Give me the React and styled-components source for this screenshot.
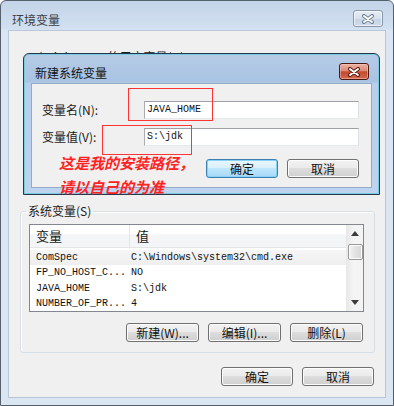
import React from "react";
import styled, { createGlobalStyle } from "styled-components";

const CJK = `"Noto Sans CJK SC", "Noto Sans", sans-serif`;
const MONO = `"Liberation Mono", "DejaVu Sans Mono", monospace`;

const Global = createGlobalStyle`
  html, body { margin: 0; padding: 0; background: #ffffff; }
  body { font-family: ${CJK}; }
  * { box-sizing: border-box; }
`;

const Window = styled.div`
  position: relative;
  width: 394px;
  height: 406px;
  border: 1px solid #56606d;
  border-radius: 6px 6px 0 0;
  background: linear-gradient(#c3d4e8 0px, #d2e0f0 28px, #dae6f3 29px, #dbe6f3 100%);
  display: flex;
  flex-direction: column;
  padding: 0 7px 7px 7px;
  overflow: hidden;
`;

const TitleBar = styled.div`
  height: 29px;
  flex: none;
  display: flex;
  justify-content: space-between;
  align-items: flex-start;
  padding: 0 3px 0 4px;
`;

const TitleText = styled.div`
  font-family: ${CJK};
  font-size: 12px;
  line-height: 14px;
  color: ${(p) => (p.$active ? "#111" : "#3a3f47")};
  padding-top: 12px;
`;

const CloseButton = styled.div`
  margin-top: 9px;
  width: 30px;
  height: 17px;
  border-radius: 3px;
  display: flex;
  align-items: center;
  justify-content: center;
  border: 1px solid ${(p) => (p.$red ? "#4a1a14" : "#8a98ab")};
  background: ${(p) =>
    p.$red
      ? "linear-gradient(#eab2a4 0%, #dc8a77 45%, #c44a30 52%, #d0694a 100%)"
      : "linear-gradient(#e6edf6 0%, #d6e1ee 50%, #c6d4e5 52%, #cfdbea 100%)"};
  box-shadow: inset 0 0 0 1px ${(p) => (p.$red ? "rgba(255,200,190,0.5)" : "rgba(255,255,255,0.6)")};
`;

const ClientArea = styled.div`
  flex: 1;
  background: #f0f0f0;
  border: 1px solid #b7c7d9;
  display: flex;
  flex-direction: column;
  padding: 19px 10px 11px 11px;
`;

const HiddenLabel = styled.div`
  font-family: ${CJK};
  font-size: 12px;
  line-height: 14px;
  color: #1a1a1a;
  padding-left: 8px;
  height: 14px;
`;

const GroupBox = styled.fieldset`
  margin: 140px 0 0 0;
  border: 1px solid #d5dfe5;
  border-radius: 3px;
  padding: 0 10px 10px 8px;
  box-shadow: inset 1px 1px 0 #ffffff;
  min-width: 0;
`;

const Legend = styled.legend`
  font-family: ${CJK};
  font-size: 12px;
  line-height: 14px;
  padding: 0 2px;
  margin-left: -3px;
  color: #1a1a1a;
`;

const ListView = styled.div`
  margin-top: 6px;
  height: 88px;
  border: 1px solid #828790;
  background: #ffffff;
  display: flex;
`;

const ListMain = styled.div`
  flex: 1;
  min-width: 0;
  display: flex;
  flex-direction: column;
  overflow: hidden;
`;

const HeaderRow = styled.div`
  height: 23px;
  flex: none;
  display: flex;
  background: linear-gradient(#ffffff 0%, #ffffff 40%, #f4f5f7 45%, #f4f5f7 100%);
  border-bottom: 1px solid #e5e5e5;
`;

const HeaderCell = styled.div`
  width: ${(p) => p.$w || "auto"};
  flex: ${(p) => (p.$w ? "none" : "1")};
  font-family: ${CJK};
  font-size: 13px;
  line-height: 22px;
  color: #1a1a1a;
  padding-left: ${(p) => p.$pl || "5px"};
  border-right: ${(p) => (p.$w ? "1px solid #e3e5e8" : "none")};
`;

const Rows = styled.div`
  padding-top: 2px;
`;

const Row = styled.div`
  height: 15.3px;
  display: flex;
  align-items: center;
  background: ${(p) => (p.$hl ? "linear-gradient(#f6f6f6, #eeeeee)" : "transparent")};
  font-family: ${MONO};
  font-size: 10px;
  color: #111;
`;

const Cell = styled.div`
  width: ${(p) => p.$w || "auto"};
  flex: ${(p) => (p.$w ? "none" : "1")};
  padding-left: ${(p) => p.$pl || "5px"};
  white-space: nowrap;
  overflow: hidden;
`;

const ScrollBar = styled.div`
  width: 17px;
  flex: none;
  background: linear-gradient(90deg, #e9e9e9, #f4f4f4 40%, #f4f4f4);
  border-left: 1px solid #e8e8e8;
  display: flex;
  flex-direction: column;
  align-items: center;
`;

const ArrowBox = styled.div`
  width: 16px;
  height: 17px;
  display: flex;
  align-items: center;
  justify-content: center;
`;

const Thumb = styled.div`
  margin-top: 2px;
  width: 15px;
  height: 16px;
  border: 1px solid #9a9a9a;
  border-radius: 2px;
  background: linear-gradient(90deg, #f3f3f3, #e2e2e2 50%, #d6d6d6);
  box-shadow: inset 0 0 0 1px #fbfbfb;
`;

const Track = styled.div`
  flex: 1;
`;

const ButtonRow = styled.div`
  display: flex;
  justify-content: flex-end;
  gap: ${(p) => p.$gap || "9px"};
  margin-top: ${(p) => p.$mt || "0"};
  padding-right: ${(p) => p.$pr || "0"};
`;

const Button = styled.div`
  width: ${(p) => p.$w || "73px"};
  height: 19px;
  border: 1px solid ${(p) => (p.$default ? "#3c7fb1" : "#707070")};
  border-radius: 3px;
  background: ${(p) =>
    p.$default
      ? "linear-gradient(#eaf6fd 0%, #d9f0fc 45%, #bee6fd 50%, #a7d9f5 100%)"
      : "linear-gradient(#f2f2f2 0%, #ebebeb 45%, #dddddd 50%, #cfcfcf 100%)"};
  box-shadow: inset 0 0 0 1px ${(p) => (p.$default ? "#86d2f5" : "#fcfcfc")};
  font-family: ${CJK};
  font-size: 12px;
  line-height: 17px;
  text-align: center;
  color: #111;
  white-space: nowrap;
`;

const BottomButtons = styled(ButtonRow)`
  margin-top: auto;
  padding-right: 1px;
`;

const Dialog = styled.div`
  position: absolute;
  left: 22px;
  top: 52px;
  width: 357px;
  height: 142px;
  border: 1px solid #27384b;
  border-radius: 6px 6px 0 0;
  background: linear-gradient(#b6cce6 0px, #a9c3e3 28px, #b7cfec 29px, #bdd3ee 100%);
  box-shadow: inset 0 0 0 1px #79c9e0;
  display: flex;
  flex-direction: column;
  padding: 0 7px 6px 7px;
`;

const DialogClient = styled.div`
  flex: 1;
  background: #f0f0f0;
  border: 1px solid #94abc7;
  padding: 17px 12px 0 10px;
  display: flex;
  flex-direction: column;
`;

const FieldRow = styled.div`
  display: flex;
  align-items: center;
  margin-top: ${(p) => p.$mt || "0"};
`;

const FieldLabel = styled.div`
  width: 102px;
  flex: none;
  font-family: ${CJK};
  font-size: 12px;
  line-height: 14px;
  color: #1a1a1a;
`;

const TextBox = styled.div`
  width: 218px;
  height: 18px;
  background: #fff;
  border: 1px solid #abadb3;
  border-top-color: #9da0a7;
  border-right-color: #dbdfe6;
  border-bottom-color: #e3e9ef;
  font-family: ${MONO};
  font-size: 10px;
  line-height: 16px;
  padding-left: 2px;
  color: #111;
`;

const RedBox = styled.div`
  position: absolute;
  left: ${(p) => p.$x}px;
  top: ${(p) => p.$y}px;
  width: ${(p) => p.$w}px;
  height: ${(p) => p.$h}px;
  border: 1px solid #ff3535;
  pointer-events: none;
`;

const Note = styled.div`
  position: absolute;
  left: 58px;
  top: 150px;
  font-family: ${CJK};
  font-size: 15px;
  font-weight: bold;
  font-style: italic;
  line-height: 24px;
  color: #ff2222;
  white-space: nowrap;
`;

const XIcon = ({ red }) => (
  <svg width="14" height="10" viewBox="0 0 14 10">
    <path d="M3 2 L11 8 M11 2 L3 8" stroke={red ? "#5a1a12" : "#6f7d90"} strokeWidth="4" strokeLinecap="round" />
    <path d="M3 2 L11 8 M11 2 L3 8" stroke="#ffffff" strokeWidth="2" strokeLinecap="round" />
  </svg>
);

const Arrow = ({ down }) => (
  <svg width="8" height="5" viewBox="0 0 8 5">
    <path d={down ? "M0 0 L8 0 L4 5 Z" : "M4 0 L8 5 L0 5 Z"} fill="#3c3c3c" />
  </svg>
);

const rows = [
  ["ComSpec", "C:\\Windows\\system32\\cmd.exe", true],
  ["FP_NO_HOST_C...", "NO"],
  ["JAVA_HOME", "S:\\jdk"],
  ["NUMBER_OF_PR...", "4"],
];

export default function App() {
  return (
    <>
      <Global />
      <Window>
        <TitleBar>
          <TitleText>环境变量</TitleText>
          <CloseButton>
            <XIcon />
          </CloseButton>
        </TitleBar>
        <ClientArea>
          <HiddenLabel>Administrator 的用户变量(U)</HiddenLabel>
          <GroupBox>
            <Legend>系统变量(S)</Legend>
            <ListView>
              <ListMain>
                <HeaderRow>
                  <HeaderCell $w="100px" $pl="6px">变量</HeaderCell>
                  <HeaderCell $pl="6px">值</HeaderCell>
                </HeaderRow>
                <Rows>
                  {rows.map(([n, v, hl]) => (
                    <Row key={n} $hl={hl}>
                      <Cell $w="101px" $pl="6px">{n}</Cell>
                      <Cell $pl="0px">{v}</Cell>
                    </Row>
                  ))}
                </Rows>
              </ListMain>
              <ScrollBar>
                <ArrowBox>
                  <Arrow />
                </ArrowBox>
                <Thumb />
                <Track />
                <ArrowBox>
                  <Arrow down />
                </ArrowBox>
              </ScrollBar>
            </ListView>
            <ButtonRow $mt="11px" $pr="1px">
              <Button>新建(W)...</Button>
              <Button>编辑(I)...</Button>
              <Button>删除(L)</Button>
            </ButtonRow>
          </GroupBox>
          <BottomButtons>
            <Button $w="72px">确定</Button>
            <Button $w="72px">取消</Button>
          </BottomButtons>
        </ClientArea>

        <Dialog>
          <TitleBar>
            <TitleText $active>新建系统变量</TitleText>
            <CloseButton $red>
              <XIcon red />
            </CloseButton>
          </TitleBar>
          <DialogClient>
            <FieldRow>
              <FieldLabel>变量名(N):</FieldLabel>
              <TextBox>JAVA_HOME</TextBox>
            </FieldRow>
            <FieldRow $mt="9px">
              <FieldLabel>变量值(V):</FieldLabel>
              <TextBox>S:\jdk</TextBox>
            </FieldRow>
            <ButtonRow $mt="13px">
              <Button $w="72px" $default>确定</Button>
              <Button $w="72px">取消</Button>
            </ButtonRow>
          </DialogClient>
        </Dialog>

        <RedBox $x={127} $y={87} $w={85} $h={33} />
        <RedBox $x={101} $y={124} $w={90} $h={30} />
        <Note>
          这是我的安装路径，
          <br />
          请以自己的为准
        </Note>
      </Window>
    </>
  );
}
